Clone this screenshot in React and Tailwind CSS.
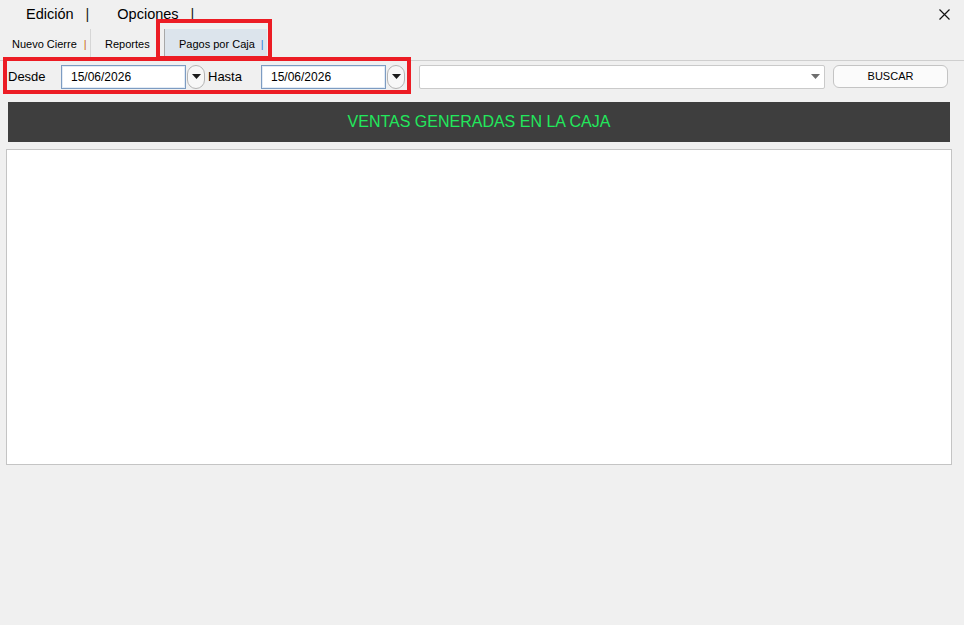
import React from "react";

function DropCircle() {
    return (
        <div className="flex h-[24px] w-[18px] items-center justify-center rounded-[9px] border border-[#b4b4b4] bg-[#f7f7f7]">
            <svg width="9" height="5" viewBox="0 0 9 5">
                <polygon points="0,0 9,0 4.5,5" fill="#1a1a1a" />
            </svg>
        </div>
    );
}

function DateField({ value }) {
    return (
        <div className="flex items-center gap-[1px]">
            <div className="flex h-[24px] w-[125px] items-center border border-[#7d9cc2] bg-white pl-[9px] text-[12px] text-black shadow-[inset_0_0_0_1px_#e3ebf5]">
                {value}
            </div>
            <DropCircle />
        </div>
    );
}

export default function App() {
    return (
        <div
            className="relative h-[625px] w-[964px] overflow-hidden bg-[#f0f0f0] text-black"
            style={{ fontFamily: '"Liberation Sans", Arial, sans-serif' }}
        >
            {/* menu */}
            <div className="flex h-[29px] items-center pl-[26px] text-[14.5px]">
                <span>Edición</span>
                <span className="ml-[12px] text-[#202020]">|</span>
                <span className="ml-[28px]">Opciones</span>
                <span className="ml-[12px] text-[#202020]">|</span>
                <div className="ml-auto mr-[14px] flex items-center">
                    <svg width="11" height="11" viewBox="0 0 11 11">
                        <path d="M0.5 0.5 L10.5 10.5 M10.5 0.5 L0.5 10.5" stroke="#111" strokeWidth="1.2" />
                    </svg>
                </div>
            </div>

            {/* tabs */}
            <div className="flex h-[32px] border-b border-[#cfcfcf] text-[11px]">
                <div className="flex h-[30px] w-[91px] items-center border-r border-[#d6d6d6] pl-[12px]">
                    <span>Nuevo Cierre</span>
                    <span className="ml-[7px] text-[#c86e1a]">|</span>
                </div>
                <div className="flex h-[30px] w-[74px] items-center border-r border-[#a8a8a8] pl-[14px]">
                    <span>Reportes</span>
                </div>
                <div className="flex h-[30px] w-[102px] items-center bg-[#dce4ec] pl-[14px]">
                    <span>Pagos por Caja</span>
                    <span className="ml-[6px] text-[#2f7fd8]">|</span>
                </div>
            </div>

            {/* filters */}
            <div className="mt-[3px] flex h-[25px] items-center pl-[8px] text-[13px]">
                <span className="w-[53px]">Desde</span>
                <DateField value="15/06/2026" />
                <span className="ml-[3px] w-[53px]">Hasta</span>
                <DateField value="15/06/2026" />
                <div className="ml-[14px] flex h-[24px] w-[406px] items-center justify-end rounded-[2px] border border-[#cacaca] bg-white pr-[4px]">
                    <svg width="9" height="5" viewBox="0 0 9 5">
                        <polygon points="0,0 9,0 4.5,5" fill="#6e6e6e" />
                    </svg>
                </div>
                <button className="ml-[8px] flex h-[23px] w-[115px] items-center justify-center rounded-[6px] border border-[#c4c4c4] bg-[#fbfbfb] text-[11px]">
                    BUSCAR
                </button>
            </div>

            {/* banner */}
            <div className="ml-[8px] mt-[13px] flex h-[40px] w-[942px] items-center justify-center bg-[#3e3e3e] text-[16px] text-[#22e85c]">
                VENTAS GENERADAS EN LA CAJA
            </div>

            {/* grid area */}
            <div className="ml-[6px] mt-[7px] h-[316px] w-[946px] border border-[#c4c4c4] bg-white" />

            {/* annotation boxes */}
            <div className="pointer-events-none absolute left-[156px] top-[19px] h-[41px] w-[116px] border-[4px] border-[#ec1c24]" />
            <div className="pointer-events-none absolute left-[3px] top-[57px] h-[37px] w-[408px] border-[4px] border-[#ec1c24]" />
        </div>
    );
}
